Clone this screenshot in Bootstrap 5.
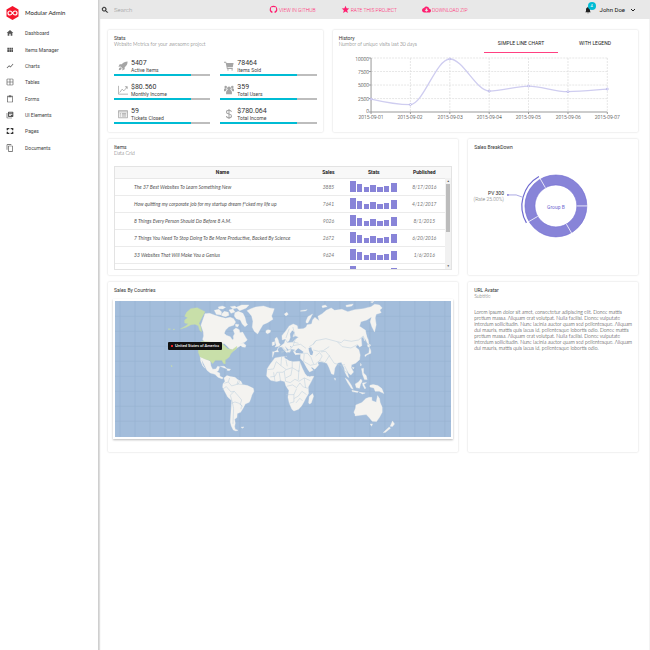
<!DOCTYPE html>
<html lang="en">
<head>
<meta charset="utf-8">
<meta name="viewport" content="width=device-width, initial-scale=1">
<title>Modular Admin</title>
<link href="https://cdn.jsdelivr.net/npm/bootstrap@5.3.0/dist/css/bootstrap.min.css" rel="stylesheet">
<style>
body{font-family:Roboto,"Liberation Sans",sans-serif;font-size:5px;line-height:6px;color:#222;background:#fff;font-weight:300}
.brand,.sub,.lorem,.grid-box td,.map-tip{font-family:Lato,Roboto,sans-serif;font-weight:400}
a{color:inherit;text-decoration:none}
svg{display:block;fill:currentColor}
.side{width:99px;flex:none;border-right:1px solid #cfcfcf;box-shadow:1px 0 1px #ddd;z-index:1}
.brand{height:25px;padding:0 6px;gap:6px;font-size:6px}
.brand svg{width:13px;height:14px}
.side-nav{height:131px;padding:0 6px;font-weight:400;color:#444}
.side-nav a{gap:11px}
.side-nav svg{width:8px;height:8px;color:#555}
.topbar{height:19px;background:#e8e8e8;padding:0 13px 0 2px}
.search-box{width:168px;gap:3px}
.search-box svg,.user svg{width:8px;height:8px;color:#222}
.search-box input{font-size:6px;line-height:8px;padding:0 2px;border:0;background:none;width:100px;outline:0;font-weight:300}
.search-box input::placeholder{color:#999}
.top-links{gap:25px;color:#ff1f70;text-transform:uppercase}
.top-links a{gap:1px}
.top-links svg{width:9px;height:9px;color:#ff1f70}
.user button{font-size:6px;line-height:8px;padding:0;border:0;background:none;color:#111;gap:4px}
.user{gap:8px}
.badge-dot{position:absolute;left:4px;top:-4px;width:8px;height:8px;border-radius:4px;background:#00bcd4;color:#fff;font-size:4px;line-height:8px;text-align:center}
.board{padding:11px 11px 0 9px;border-right:1px solid #f3f3f3}
.board .row{--bs-gutter-x:10px;--bs-gutter-y:0;margin-bottom:7px}
.w-stats{width:41.6%}.w-hist{width:58.4%}.w-wide{width:66.7%}.w-thin{width:33.3%}
.panel{border:0;border-radius:1px;box-shadow:0 0 2px #ccc;padding:5px 6px;height:100%;color:#222}
.h-a{min-height:102px}.h-b{min-height:136px}.h-c{min-height:170px}
.ttl{font-size:5px;line-height:6px;margin:0;font-weight:400;color:#333}
.sub{color:#8a8a8a;margin:0;font-weight:300;color:#555}
.stats{display:grid;grid-template-columns:1fr 1fr;gap:6px 10px;margin-top:11px}
.stat-top{height:16px;gap:3px;font-weight:400;color:#444}
.stat-top svg{width:10px;height:10px;margin-left:4px;color:#a5a5a5}
.num{font-size:7px;line-height:8px;color:#333}
.meter{height:2px;border-radius:0;background:#bdbdbd;margin:0}
.meter .progress-bar{background:#00bcd4;width:80%}
.tabs button{width:74px;border:0;border-bottom:1px solid transparent;background:none;padding:0;font-size:5px;line-height:17px;color:#222;text-transform:uppercase}
.tabs button.on{border-bottom-color:#ff4081}
svg text{font-family:Roboto,"Liberation Sans",sans-serif}
.grid-box{margin-top:10px;height:104px;overflow:hidden;border:1px solid #e3e3e3;position:relative}
.grid-box table{width:100%;table-layout:fixed;text-align:center;border-collapse:collapse}
.grid-box th{height:11px;background:#f8f8f8;color:#222;font-weight:700;border-bottom:1px solid #e8e8e8;padding:0}
.grid-box td{height:17px;padding:0;font-style:italic;color:#777;border-bottom:1px solid #ebebeb}
.grid-box td.nm{text-align:left;padding-left:19px;color:#555}
.grid-box th.nm{padding-left:20px}
.grid-box td svg{width:47px;height:11px;margin:auto;color:#8884d8}
.sbar{position:absolute;right:0;top:11px;bottom:0;width:6px;background:#f1f1f1;color:#555;font-size:3px;line-height:6px;text-align:center}
.thumb{height:48px;margin:0 1px;background:#bcbcbc}
.map-frame{margin:6px -1px 0;padding:2px;box-shadow:0 1px 2px #bbb;position:relative}
.map-frame svg{width:100%;height:auto}
.map-tip{position:absolute;left:55px;top:43px;background:#111;color:#eee;font-size:4px;line-height:8px;padding:0 3px;border-radius:1px;font-weight:700;white-space:nowrap}
.map-tip i{display:inline-block;width:2px;height:2px;background:#e22;margin-right:2px;vertical-align:middle}
.lorem{margin:10px -5px 0 0;color:#111;font-weight:300}
</style>
</head>
<body>
<svg class="d-none">
<symbol id="bars" viewBox="0 0 47 11"><path d="M0 0h6v11H0zM7 3h5v8H7zM14 6h5v5h-5zM20 4h6v7h-6zM27 6h6v5h-6zM34 5h5v6h-5zM41 2h6v9h-6z"/></symbol>
</svg>
<div class="d-flex min-vh-100">
<aside class="side">
<a href="#" class="brand d-flex align-items-center"><svg viewBox="0 0 26 28"><path fill="#f5152c" d="M13 0l12 7v14l-12 7L1 21V7z"/><path fill="none" stroke="#fff" stroke-width="2.4" d="M13 14c-2-3-3-4-5-4a4 4 0 0 0 0 8c2 0 3-1 5-4s3-4 5-4a4 4 0 0 1 0 8c-2 0-3-1-5-4z"/></svg><span>Modular Admin</span></a>
<ul class="side-nav list-unstyled d-flex flex-column m-0">
<li class="flex-fill d-flex"><a href="#" class="d-flex align-items-center"><svg viewBox="0 0 24 24"><path d="M10 20v-6h4v6h5v-8h3L12 3 2 12h3v8z"/></svg>Dashboard</a></li>
<li class="flex-fill d-flex"><a href="#" class="d-flex align-items-center"><svg viewBox="0 0 24 24"><path d="M4 11h5V5H4v6zm0 7h5v-6H4v6zm6 0h5v-6h-5v6zm6 0h5v-6h-5v6zm-6-7h5V5h-5v6zm6-6v6h5V5h-5z"/></svg>Items Manager</a></li>
<li class="flex-fill d-flex"><a href="#" class="d-flex align-items-center"><svg viewBox="0 0 24 24"><path d="M3.5 18.49l6-6.01 4 4L22 6.92l-1.41-1.41-7.09 7.97-4-4L2 16.99z"/></svg>Charts</a></li>
<li class="flex-fill d-flex"><a href="#" class="d-flex align-items-center"><svg viewBox="0 0 24 24"><path fill-rule="evenodd" d="M4 2h16l2 2v16l-2 2H4l-2-2V4zm7 18v-7H4v7zm0-9V4H4v7zm9 9v-7h-7v7zm0-9V4h-7v7z"/></svg>Tables</a></li>
<li class="flex-fill d-flex"><a href="#" class="d-flex align-items-center"><svg viewBox="0 0 24 24"><path d="M19 2h-4.18C14.4.84 13.3 0 12 0c-1.3 0-2.4.84-2.82 2H5c-1.1 0-2 .9-2 2v16c0 1.1.9 2 2 2h14c1.1 0 2-.9 2-2V4c0-1.1-.9-2-2-2zm-7 0c.55 0 1 .45 1 1s-.45 1-1 1-1-.45-1-1 .45-1 1-1zm7 18H5V4h2v3h10V4h2v16z"/></svg>Forms</a></li>
<li class="flex-fill d-flex"><a href="#" class="d-flex align-items-center"><svg viewBox="0 0 24 24"><path d="M4 6H2v14c0 1.1.9 2 2 2h14v-2H4V6zm16-4H8c-1.1 0-2 .9-2 2v12c0 1.1.9 2 2 2h12c1.1 0 2-.9 2-2V4c0-1.1-.9-2-2-2zm-1 9H9V9h10v2zm-4 4H9v-2h6v2zm4-8H9V5h10v2z"/></svg>UI Elements</a></li>
<li class="flex-fill d-flex"><a href="#" class="d-flex align-items-center"><svg viewBox="0 0 24 24"><path fill="none" stroke="#333" stroke-width="4" d="M4 10V5h6M14 5h6v5M20 14v5h-6M10 19H4v-5"/></svg>Pages</a></li>
<li class="flex-fill d-flex"><a href="#" class="d-flex align-items-center"><svg viewBox="0 0 24 24"><path d="M16 1H4c-1.1 0-2 .9-2 2v14h2V3h12V1zm3 4H8c-1.1 0-2 .9-2 2v14c0 1.1.9 2 2 2h11c1.1 0 2-.9 2-2V7c0-1.1-.9-2-2-2zm0 16H8V7h11v14z"/></svg>Documents</a></li>
</ul>
</aside>
<div class="flex-fill d-flex flex-column" style="min-width:0">
<header class="topbar d-flex align-items-center">
<label class="search-box d-flex align-items-center"><svg viewBox="0 0 24 24" stroke="currentColor"><path d="M15.5 14h-.79l-.28-.27C15.41 12.59 16 11.11 16 9.5 16 5.91 13.09 3 9.5 3S3 5.91 3 9.5 5.91 16 9.5 16c1.61 0 3.09-.59 4.23-1.57l.27.28v.79l5 4.99L20.49 19l-4.99-5zm-6 0C7.01 14 5 11.99 5 9.5S7.01 5 9.5 5 14 7.01 14 9.5 11.99 14 9.5 14z"/></svg><input type="text" placeholder="Search" aria-label="Search"></label>
<nav class="top-links d-flex">
<a href="#" class="d-flex align-items-center"><svg viewBox="0 0 24 24"><path d="M12 2a10 10 0 0 0-4 19.200c.6.1 1-.2 1-.7v-4c-2-1-4-2-4-5.500 0-1.500.5-2.500 1.200-3.500-.2-.6-.3-1.600.1-2.500 1 0 2 .5 2.700 1a9 9 0 0 1 6 0c.7-.5 1.700-1 2.700-1 .4.9.3 1.900.1 2.500.7 1 1.200 2 1.200 3.500 0 3.500-2 4.500-4 5.500v4c0 .5.400.8 1 .7A10 10 0 0 0 12 2z"/></svg>View in Github</a>
<a href="#" class="d-flex align-items-center"><svg viewBox="0 0 24 24"><path d="M12 17.300L18.200 21l-1.700-7L22 9.200l-7.200-.6L12 2 9.200 8.600 2 9.200 7.500 14l-1.700 7z"/></svg>Rate this project</a>
<a href="#" class="d-flex align-items-center"><svg viewBox="0 0 24 24"><path d="M19.35 10.04C18.67 6.59 15.64 4 12 4 9.11 4 6.6 5.64 5.35 8.04 2.34 8.36 0 10.91 0 14c0 3.31 2.69 6 6 6h13c2.76 0 5-2.24 5-5 0-2.64-2.05-4.78-4.65-4.96zM17 13l-5 5-5-5h3V9h4v4h3z"/></svg>Download zip</a>
</nav>
<div class="user d-flex align-items-center ms-auto">
<button type="button" class="position-relative" aria-label="Notifications"><svg viewBox="0 0 24 24"><path d="M12 22c1.100 0 2-.9 2-2h-4c0 1.100.89 2 2 2zm6-6v-5c0-3.070-1.640-5.640-4.500-6.320V4c0-.83-.67-1.500-1.500-1.500s-1.500.67-1.500 1.500v.68C7.630 5.360 6 7.920 6 11v5l-2 2v1h16v-1l-2-2z"/></svg><span class="badge-dot">4</span></button>
<button type="button" class="d-flex align-items-center">John Doe<svg viewBox="0 0 24 24"><path fill="none" stroke="currentColor" stroke-width="3" d="M6 9l6 6 6-6"/></svg></button>
</div>
</header>
<main class="board flex-fill">
<div class="row">
<div class="w-stats"><section class="panel card h-a">
<h2 class="ttl">Stats</h2><p class="sub">Website Metrics for your awesome project</p>
<div class="stats">
<div><div class="stat-top d-flex align-items-center"><svg viewBox="0 0 24 24"><path d="M23 1c-6 0-10 2-14 7H4l-3 6 5-1 5 5-1 5 6-3v-5c5-4 7-8 7-14zM6 15c-3 1-4 3-4 7 4 0 6-1 7-4z"/></svg><div><div class="num">5407</div><div>Active Items</div></div></div><div class="progress meter"><div class="progress-bar"></div></div></div>
<div><div class="stat-top d-flex align-items-center"><svg viewBox="0 0 24 24"><path d="M0 2h5l1 3h17l-2 10H8l1 2h12v2H7L4 4H0zM8 20h3v3H8zm10 0h3v3h-3z"/></svg><div><div class="num">78464</div><div>Items Sold</div></div></div><div class="progress meter"><div class="progress-bar"></div></div></div>
<div><div class="stat-top d-flex align-items-center"><svg viewBox="0 0 24 24"><path fill="none" stroke="currentColor" stroke-width="2" d="M1 2v20h23M4 18l6-8 4 4 8-9"/><path d="M16 3h7v7z"/></svg><div><div class="num">$80.560</div><div>Monthly Income</div></div></div><div class="progress meter"><div class="progress-bar"></div></div></div>
<div><div class="stat-top d-flex align-items-center"><svg viewBox="0 0 24 24"><circle cx="12" cy="8" r="4.500"/><circle cx="4" cy="5" r="3"/><circle cx="20" cy="5" r="3"/><path d="M5 22v-6l3-4h8l3 4v6zM0 15v-5l2-2h4v4l-3 3zM24 15v-5l-2-2h-4v4l3 3z"/></svg><div><div class="num">359</div><div>Total Users</div></div></div><div class="progress meter"><div class="progress-bar"></div></div></div>
<div><div class="stat-top d-flex align-items-center"><svg viewBox="0 0 24 24"><path fill="none" stroke="currentColor" stroke-width="2" d="M1 4h22v17H1zM1 7h22M4 11h3M4 14h3M4 17h3M9 11h11M9 14h11M9 17h11"/></svg><div><div class="num">59</div><div>Tickets Closed</div></div></div><div class="progress meter"><div class="progress-bar"></div></div></div>
<div><div class="stat-top d-flex align-items-center"><svg viewBox="0 0 24 24"><path fill="none" stroke="currentColor" stroke-width="2.500" d="M18 7c-1-3-3-4-6-4s-6 1-6 4.500c0 6 12 3 12 9 0 3-3 4.500-6 4.500s-6-1-6-4.500M12 0v24"/></svg><div><div class="num">$780.064</div><div>Total Income</div></div></div><div class="progress meter"><div class="progress-bar"></div></div></div>
</div>
</section></div>
<div class="w-hist"><section class="panel card h-a">
<div class="d-flex justify-content-between"><div><h2 class="ttl">History</h2><p class="sub">Number of unique visits last 30 days</p></div>
<div class="tabs d-flex"><button type="button" class="on">Simple line chart</button><button type="button">With legend</button></div></div>
<svg class="w-100" viewBox="0 0 293 68" role="img" aria-label="Visits">
<path fill="none" stroke="#ddd" stroke-width=".7" stroke-dasharray="2 1" d="M32 5h236M32 18.500h236M32 32h236M32 45.500h236M71.300 5v54M110.700 5v54M150 5v54M189.300 5v54M228.700 5v54M268 5v54"/>
<path fill="none" stroke="#999" stroke-width="1" d="M32 5v54h236M30 5h2M30 18.500h2M30 32h2M30 45.500h2M30 59h2M32 59v2M71.300 59v2M110.700 59v2M150 59v2M189.300 59v2M228.700 59v2M268 59v2"/>
<path fill="none" stroke="#cfcdf0" stroke-width="1.300" d="M32 46C45 49 58 51.500 71.300 51.500C84 51.500 97 6 110.700 6C124 6 137 38 150 38C163 38 176 33 189.300 33C202 33 215 38.600 228.700 38.600C242 38.600 255 37 268 36"/>
<g fill="#fff" stroke="#aaa7e4" stroke-width=".7"><circle cx="32" cy="46" r="1"/><circle cx="71.300" cy="51.500" r="1"/><circle cx="110.700" cy="6" r="1"/><circle cx="150" cy="38" r="1"/><circle cx="189.300" cy="33" r="1"/><circle cx="228.700" cy="38.600" r="1"/><circle cx="268" cy="36" r="1"/></g>
<g font-size="5" fill="#222" text-anchor="end"><text x="30" y="8">10000</text><text x="30" y="21">7500</text><text x="30" y="34">5000</text><text x="30" y="48">2500</text><text x="30" y="60">0</text></g>
<g font-size="5" fill="#222" text-anchor="middle"><text x="32" y="66">2015-09-01</text><text x="71" y="66">2015-09-02</text><text x="111" y="66">2015-09-03</text><text x="150" y="66">2015-09-04</text><text x="189" y="66">2015-09-05</text><text x="229" y="66">2015-09-06</text><text x="268" y="66">2015-09-07</text></g>
</svg>
</section></div>
</div>
<div class="row">
<div class="w-wide"><section class="panel card h-b">
<h2 class="ttl">Items</h2><p class="sub">Data Grid</p>
<div class="grid-box">
<table>
<colgroup><col style="width:58%"><col style="width:11%"><col style="width:16%"><col style="width:14%"><col style="width:1%"></colgroup>
<thead><tr><th class="nm">Name</th><th>Sales</th><th>Stats</th><th>Published</th><th></th></tr></thead>
<tbody>
<tr><td class="nm">The 37 Best Websites To Learn Something New</td><td>3885</td><td><svg><use href="#bars"/></svg></td><td>8/17/2016</td><td></td></tr>
<tr><td class="nm">How quitting my corporate job for my startup dream f*cked my life up</td><td>7641</td><td><svg><use href="#bars"/></svg></td><td>4/12/2017</td><td></td></tr>
<tr><td class="nm">8 Things Every Person Should Do Before 8 A.M.</td><td>9026</td><td><svg><use href="#bars"/></svg></td><td>8/1/2015</td><td></td></tr>
<tr><td class="nm">7 Things You Need To Stop Doing To Be More Productive, Backed By Science</td><td>2672</td><td><svg><use href="#bars"/></svg></td><td>6/20/2016</td><td></td></tr>
<tr><td class="nm">33 Websites That Will Make You a Genius</td><td>9624</td><td><svg><use href="#bars"/></svg></td><td>1/6/2016</td><td></td></tr>
<tr><td class="nm"></td><td></td><td><svg><use href="#bars"/></svg></td><td></td><td></td></tr>
</tbody>
</table>
<div class="sbar d-flex flex-column"><span>▲</span><div class="thumb"></div><span class="mt-auto">▼</span></div>
</div>
</section></div>
<div class="w-thin"><section class="panel card h-b">
<h2 class="ttl">Sales BreakDown</h2>
<svg class="w-100 overflow-visible" viewBox="0 0 158 118" role="img" aria-label="Sales breakdown">
<circle cx="82" cy="56" r="26" fill="none" stroke="#8884d8" stroke-width="10"/>
<g fill="none" stroke="#6f6ad0" stroke-width=".6"><circle cx="82" cy="56" r="31"/><circle cx="82" cy="56" r="21"/></g>
<path stroke="#fff" stroke-width=".8" d="M103 56h11M92.500 74.200l5.500 9.500M63.800 66.500l-9.500 5.500M71.500 37.800l-5.500-9.500"/>
<path fill="none" stroke="#6f6ad0" stroke-width="1.200" d="M52.500 73A34 34 0 0 1 65 26.500"/>
<path fill="none" stroke="#8884d8" stroke-width=".7" d="M48 47q-5-3-13-2"/><circle cx="34" cy="45" r=".9" fill="#6f6ad0"/>
<g font-size="5"><text x="30" y="45" text-anchor="end" fill="#222" font-weight="400">PV 300</text><text x="30" y="51" text-anchor="end" fill="#777">(Rate 25.00%)</text><text x="82" y="59" text-anchor="middle" fill="#6f6ad0" font-weight="400">Group B</text></g>
</svg>
</section></div>
</div>
<div class="row">
<div class="w-wide"><section class="panel card h-c">
<h2 class="ttl">Sales By Countries</h2>
<div class="map-frame">
<svg viewBox="32 69 1009 408" role="img" aria-label="World map">
<path fill="#a3bddb" d="M32 69h1009v408H32z"/>
<path fill="none" stroke="#98b3d2" stroke-width="2" d="M47 69v408M92 69v408M137 69v408M182 69v408M227 69v408M272 69v408M317 69v408M362 69v408M407 69v408M452 69v408M497 69v408M542 69v408M587 69v408M632 69v408M662 69v408M707 69v408M752 69v408M797 69v408M842 69v408M887 69v408M932 69v408M977 69v408M1022 69v408M32 115h1009M32 160h1009M32 205h1009M32 250h1009M32 295h1009M32 340h1009M32 385h1009M32 430h1009"/>
<g fill="#f4f3f0" stroke="#f4f3f0" stroke-width="1" stroke-linejoin="round">
<path d="M428 98l12-6 14-5 24-3 18 6 14 2-4 12-4 10 4 10-16 10-14 6-8 14-8 14-10-8-6-12 2-18-4-16-8-10zM485 158l6-3 8 2-1 6-8 4-5-3z"/>
<path d="M302 107l14-1 14 5 16 5 18 5 14-3 10 4 6 10-6 10-14 4-10 10-4 10 6 6 12 4 6 9 4-2-1-8 4-8-4-11 8-6 10 5 2 9 8-2 8 14 6 10-8 7-14 4 10-2 8 7-2 6-8-1-6-4-10 6-10 8-12-4-16-16-60-4-6-9 3-10-1-12-7-20z"/>
<path d="M330 97l14-3 8 8-2 9-14-2zM352 108l8-8 12 3 2 9-10 4-12-3zM342 87l12-3 10 4-8 5-12-1zM374 96l12-3 6 9-12 4zM378 86l14-2 6 6-12 2zM396 88l16-7 22 0-8 9-20 8zM392 104l10-4 14 6 6 12 4 16 4 6-8 6-8-8-6-12-12-4-6-8zM394 138l10 2-4 7-6-2z"/>
<path d="M288 236l17 8 13 6 2 14 5 10 10-1 5-8 6 1-4 12-5 3 9 4 1 10 9 4-2 4-13-5-9-9-14-4-10-8-6-12-8-16-2-3 3 13 7 12-7-8-6-14zM348 265l12 0 8 7-8-2zM369 272l10 2-4 4-7-1z"/>
<path d="M359 300l9-7 10 3 14 2 8 7 10 5 5 10 15 3 17 8 2 9-6 11-4 13-4 9-12 5-6 12-8 13-10 4-1 12-7 5 2 12-2 10 2 8 8 3-6 2-8-3-6-12-3-12 2-30 2-34-12-11-9-17-6-12 1-10 6-8zM410 448l9-1-4 4z"/>
<path d="M512 240l16-3 18-2 6 12 14 4 20-1 8 20 8 17 7 8 20 0-8 16-9 16 1 20-8 13-6 12-7 12-9 10-14 5-6-5-8-18-4-18 3-20-9-14-4-13-12-3-12 3-18-4-12-13 2-22 9-14zM613 375l2-19 10-9 3 8-7 20-5 3z"/>
<path d="M512 182l6-4 4 8 2 8 4 6-4 5-12 2 4-6-3-8zM504 193l7-2 0 9-7 3z"/>
<g transform="translate(525)">
<path d="M-20 238l0-17 18 1-4-9 10-9 11-8 3-10 6 8 16-1 8-9 10-6-8-4-9 2 5-13-7-6-7 10 1 12-4 10-5 3-6-9-9 3-1-13 12-15 10-14 12-6 12 5 2 10 16-1 8-4 4-8 13-2 3-12 7-8 6 5 7 5-4-13 13-8 12-10 15-7 10 7 22-3 18 7 20-6 26-3 24-6 10-7 15 2 8 9-7 6 4 8-15 5-3 11 3 20-5 22-8-16-5-15 4-14-14 9-18 5-4 14 18 12 3 18-6 14-4-13-6 5 2 22-7 4-5-7-7 7 10 8 4 16-2 14-12 11-12 4-1 9 7 13-8 9-8-6-4-8 4 16 2 6-5-3-7-14-2-12-9-17-10 2-9 15-3 20-7-2-8-20-6-12-14-4-12-1-1 7 3 2-12 14-16 8-7-10-11-20-10-11 1-12-16 1-6-10 6-5-12-2-4 10-7-1 3-7-12-12 10 18-3 3-6-5-10-12-8 0-4 8-10 7z"/>
<path d="M15 108l8-5 4 6-7 5zM64 98l20-3-6 4-14 1zM80 130l6-14 14-8-6 12-8 15-5 0zM128 84l10-3 6 5-14 3zM200 82l22-4-4 6-16 3zM274 72l10-2-4 4z"/>
<path d="M253 162l6 5 8 18 2 12-4 0-8-18zM266 197l9 4-6 7-4-3zM271 208l4 10 0 8-12 5-5 5-1-5 12-6z"/>
<path d="M198 300l8 6 10 15 6 13-6-3-11-17zM218 337l20 4-3 3-16-3zM228 318l10-6 7-9 4 6-5 10-3 12-10-2zM250 315l12-1-8 6 6 10-3 3-6-10zM247 272l6-1 0 14 8 8 3 12-8 0-6-15zM272 322l10-2 14 3 12 9 6 15-14-7-12 0-4-10-12-3zM240 343l18 2-8 3z"/>
<path d="M228 411l-4-8 5-13 1-9 18-7 12-12 10-4 8 0 0 10 13 5 4-20 6 9 2 12 6 14 0 15-8 15-9 13-13-1-10-12-8-8-18 2-16 2zM273 438l7 0-3 7zM340 429l6 9-6 8-7-1zM330 447l4 4-16 13-6 0z"/>
<path d="M165 301l4 1-1 5zM244 256l3 5-3 3zM219 268l6 1-3 4z"/>
</g></g>
<g fill="#a3bddb"><path d="M573 219l9-8 8 5 8 6-4 4-19-1zM613 210l8-2 2 8 4 6-3 10-6-2-4-12zM592 250l6 9 14 22 8 12-3 4-12-20-16-26zM622 267l12 10-4 2-8-8zM557 205l4 0 0 5zM541 233l20 11-2 5-18-9z"/></g>
<g fill="#c8dfa9" stroke="#c8dfa9" stroke-linejoin="round"><path d="M247 103l12-11 20-3 23 12-18 35 6 12 2 14-6-5-4-14-10-4-12 1-14 8-18 5 16-9 8-7-11-2 0-9 9-7-9-4zM292 190l60 5 18 17 14 3 14-10-1 7-10 8-8 8-4 9-12 9 0 12-6-2-4-9-20 0-8 10-9-10-12-3-17-8-5-13 1-16z"/><path d="M200 262l4 2-2 3zM192 152l7 1-6 2zM206 154l5-1-2 3z"/></g>
<g fill="none" stroke="#b8ccdc" stroke-width="1.500"><path d="M360 316l12-4 4-12M372 312l10 12 20-6 4-8M354 334l12-8 14 16 10-2 12 14 10 12-4 14 8 6M382 376l10-4 12 4 8 6-2 12M390 340l-12 12 6 20 4 20-2 46M402 308l-4 10 22 2"/>
<path d="M490 275l18-2 8-22 14 12 16 12-10 8-18 0-6 12-14 2M530 263l2-26M546 275l18-6 0-20M564 269l20 12 4-32M545 245l4 20M508 283l4 26M525 285l4 24M540 280l4 30 14 4 14-10 12 6 16-10 18 8M564 270l-4 22-16 8M584 276l-2 30M547 325l18-4 12 8 10-14 10 12 14 4M545 350l24 0 8-18M569 350l0 22-14 4M569 362l14-8 10-14 14 10M575 375l12-14 8 8M600 300l4 30"/>
<path d="M533 205l10 12 14-2 10-12 4-14 6-10M543 217l-12 8M557 215l16 5M567 203l22-4 16 12M555 188l12 4 16 4M530 222l10-3M548 226l14-6M562 189l10-16-6-26M545 180l10-28M627 200l8-12 30-6 30 8 16 4 8-8 22 4 22-4 14-12 8 18 14 14M635 188l-10 12-10 6M627 216l16 4 14-2 18-12M700 192l14 14 26 4 20-10M650 222l14-2 10 12 16 24 20 6 12-2M634 234l12-10 8 10-8 14-10 8M646 248l16 6 14-22M584 226l26 0 10 12 8 20M600 228l-2 22M598 250l20 12 20-4M709 262l10 16 14 8M721 264l12 24M705 262l-6-4"/></g>
</svg>
<div class="map-tip"><i></i>United States of America</div>
</div>
</section></div>
<div class="w-thin"><section class="panel card h-c">
<h2 class="ttl">URL Avatar</h2><p class="sub">Subtitle</p>
<p class="lorem">Lorem ipsum dolor sit amet, consectetur adipiscing elit. Donec mattis pretium massa. Aliquam erat volutpat. Nulla facilisi. Donec vulputate interdum sollicitudin. Nunc lacinia auctor quam sed pellentesque. Aliquam dui mauris, mattis quis lacus id, pellentesque lobortis odio. Donec mattis pretium massa. Aliquam erat volutpat. Nulla facilisi. Donec vulputate interdum sollicitudin. Nunc lacinia auctor quam sed pellentesque. Aliquam dui mauris, mattis quis lacus id, pellentesque lobortis odio.</p>
</section></div>
</div>
</main>
</div>
</div>
<script src="https://cdn.jsdelivr.net/npm/bootstrap@5.3.0/dist/js/bootstrap.bundle.min.js"></script>
</body>
</html>
